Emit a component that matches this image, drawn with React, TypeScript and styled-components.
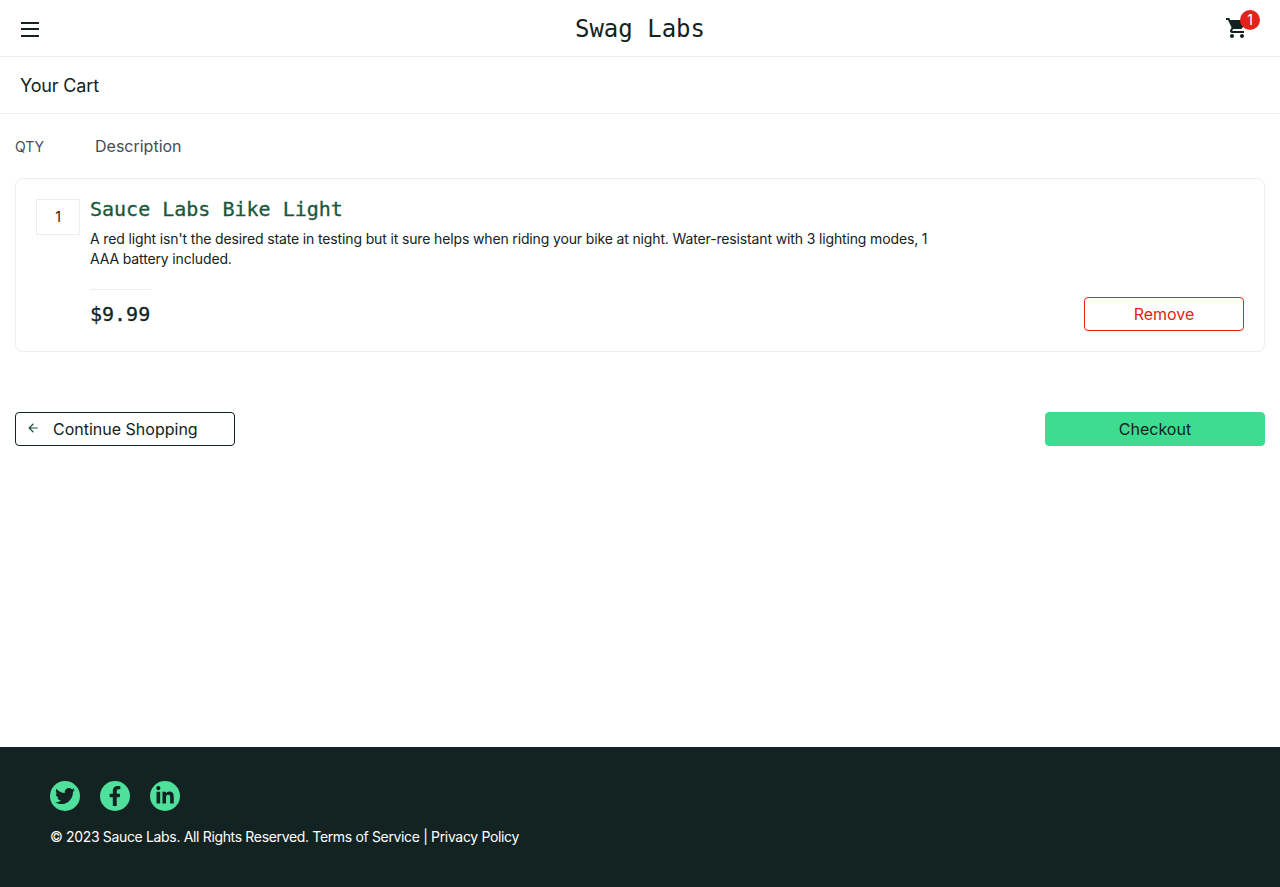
import React from 'react';
import styled, { createGlobalStyle } from 'styled-components';
import { MdShoppingCart, MdArrowBack } from 'react-icons/md';
import { FaTwitter, FaFacebookF, FaLinkedinIn } from 'react-icons/fa';

const GlobalStyle = createGlobalStyle`
  html, body {
    margin: 0;
    padding: 0;
    background: #fff;
    color: #132322;
    font-family: 'Inter', 'Liberation Sans', sans-serif;
  }
  * {
    box-sizing: border-box;
  }
`;

const Page = styled.div`
  display: flex;
  flex-direction: column;
  min-height: 887px;
`;

const Header = styled.header`
  display: grid;
  grid-template-columns: 1fr auto 1fr;
  align-items: center;
  height: 57px;
  padding: 0 20px;
  border-bottom: 1px solid #ededef;
`;

const MenuButton = styled.button`
  display: flex;
  flex-direction: column;
  gap: 4.5px;
  width: 20px;
  padding: 0;
  border: none;
  background: none;
  span {
    display: block;
    height: 2px;
    width: 18px;
    margin-left: 1px;
    background: #132322;
  }
`;

const Logo = styled.div`
  font-family: 'DejaVu Sans Mono', 'Liberation Mono', monospace;
  font-size: 24px;
  line-height: 58px;
  color: #132322;
`;

const CartLink = styled.a`
  display: block;
  position: relative;
  justify-self: end;
  width: 35px;
  height: 30px;
  margin-top: -8px;
  color: #132322;
  font-size: 24px;
  svg {
    position: absolute;
    left: 0;
    bottom: 0;
  }
`;

const CartBadge = styled.span`
  position: absolute;
  top: 0;
  right: 0;
  width: 20px;
  height: 20px;
  border-radius: 50%;
  background: #e2231a;
  color: #fff;
  font-size: 14px;
  line-height: 20px;
  text-align: center;
`;

const TitleBar = styled.div`
  display: flex;
  align-items: center;
  height: 57px;
  padding: 0 20px;
  border-bottom: 1px solid #ededef;
  font-size: 18px;
  letter-spacing: -0.15px;
`;

const Content = styled.main`
  flex: 1;
  padding: 0 15px;
`;

const ListHead = styled.div`
  display: flex;
  align-items: center;
  height: 64px;
  color: #474c55;
  font-size: 16px;
`;

const QtyLabel = styled.div`
  width: 80px;
  font-size: 14px;
`;

const Card = styled.section`
  display: flex;
  gap: 10px;
  height: 174px;
  padding: 20px;
  border: 1px solid #ededef;
  border-radius: 8px;
`;

const QtyBox = styled.div`
  flex: none;
  width: 44px;
  height: 36px;
  border: 1px solid #ededef;
  font-size: 14px;
  line-height: 34px;
  text-align: center;
`;

const ItemBody = styled.div`
  flex: 1;
  display: flex;
  flex-direction: column;
`;

const ItemName = styled.div`
  font-family: 'DejaVu Sans Mono', 'Liberation Mono', monospace;
  font-size: 20px;
  line-height: 20px;
  color: #18583a;
  -webkit-text-stroke: 0.3px #18583a;
`;

const ItemDesc = styled.div`
  width: 850px;
  margin-top: 10px;
  font-size: 14px;
  line-height: 20px;
  letter-spacing: -0.14px;
`;

const ItemFoot = styled.div`
  flex: 1;
  display: flex;
  justify-content: space-between;
  align-items: flex-end;
  margin-top: 20px;
`;

const ItemPrice = styled.div`
  align-self: flex-start;
  width: 61px;
  padding-top: 9px;
  border-top: 1px solid #ededef;
  font-family: 'DejaVu Sans Mono', 'Liberation Mono', monospace;
  font-size: 20px;
  line-height: 30px;
  -webkit-text-stroke: 0.3px #132322;
`;

const Actions = styled.div`
  display: flex;
  justify-content: space-between;
  margin-top: 60px;
`;

const Button = styled.button<{ $variant: 'back' | 'remove' | 'checkout' }>`
  display: flex;
  align-items: center;
  justify-content: center;
  height: 34px;
  border-radius: 4px;
  font-family: inherit;
  font-size: 16px;
  width: ${(p) => (p.$variant === 'remove' ? '160px' : '220px')};
  border: 1px solid ${(p) => (p.$variant === 'remove' ? '#e2231a' : p.$variant === 'back' ? '#132322' : '#3ddc91')};
  background: ${(p) => (p.$variant === 'checkout' ? '#3ddc91' : '#fff')};
  color: ${(p) => (p.$variant === 'remove' ? '#e2231a' : '#132322')};
`;

const BackButton = styled(Button)`
  justify-content: flex-start;
  padding: 0 0 0 10px;
  gap: 13px;
  svg {
    color: #18583a;
    font-size: 14px;
    margin-top: -2px;
  }
`;

const Footer = styled.footer`
  height: 140px;
  padding: 34px 50px 0;
  background: #132322;
  color: #fff;
`;

const Social = styled.div`
  display: flex;
  gap: 20px;
`;

const SocialIcon = styled.a`
  display: flex;
  align-items: center;
  justify-content: center;
  width: 30px;
  height: 30px;
  border-radius: 50%;
  background: #4fe09c;
  color: #132322;
  font-size: 20px;
`;

const Copy = styled.div`
  margin-top: 16px;
  font-size: 14px;
  line-height: 20px;
  letter-spacing: -0.34px;
`;

export default function App() {
  return (
    <Page>
      <GlobalStyle />
      <Header>
        <MenuButton aria-label="Open Menu">
          <span />
          <span />
          <span />
        </MenuButton>
        <Logo>Swag Labs</Logo>
        <CartLink>
          <MdShoppingCart />
          <CartBadge>1</CartBadge>
        </CartLink>
      </Header>
      <TitleBar>Your Cart</TitleBar>
      <Content>
        <ListHead>
          <QtyLabel>QTY</QtyLabel>
          <div>Description</div>
        </ListHead>
        <Card>
          <QtyBox>1</QtyBox>
          <ItemBody>
            <ItemName>Sauce Labs Bike Light</ItemName>
            <ItemDesc>
              A red light isn't the desired state in testing but it sure helps when riding your bike at night.
              Water-resistant with 3 lighting modes, 1 AAA battery included.
            </ItemDesc>
            <ItemFoot>
              <ItemPrice>$9.99</ItemPrice>
              <Button $variant="remove">Remove</Button>
            </ItemFoot>
          </ItemBody>
        </Card>
        <Actions>
          <BackButton $variant="back">
            <MdArrowBack />
            Continue Shopping
          </BackButton>
          <Button $variant="checkout">Checkout</Button>
        </Actions>
      </Content>
      <Footer>
        <Social>
          <SocialIcon><FaTwitter /></SocialIcon>
          <SocialIcon><FaFacebookF /></SocialIcon>
          <SocialIcon><FaLinkedinIn /></SocialIcon>
        </Social>
        <Copy>© 2023 Sauce Labs. All Rights Reserved. Terms of Service | Privacy Policy</Copy>
      </Footer>
    </Page>
  );
}
